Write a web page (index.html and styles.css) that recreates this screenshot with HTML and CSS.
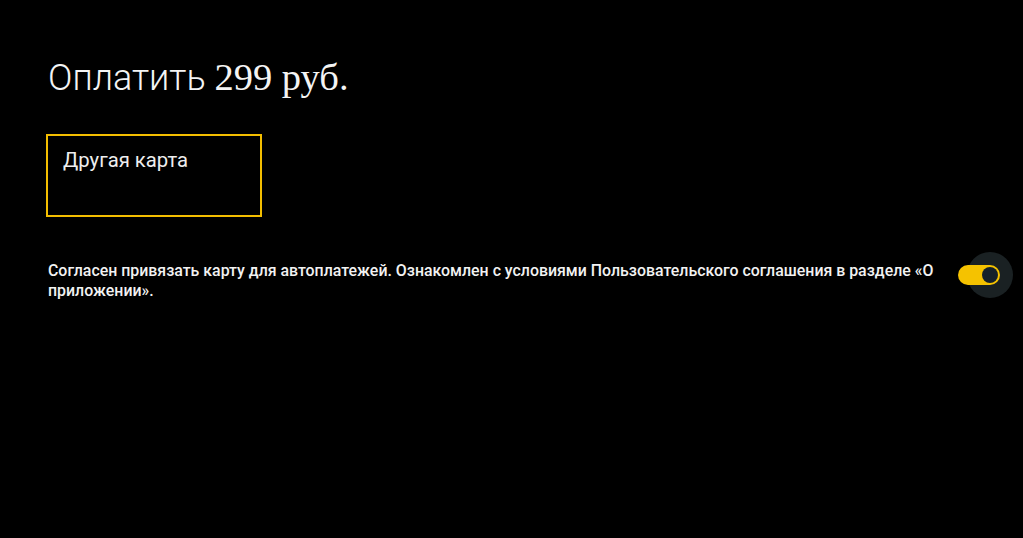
FILE: index.html
```html
<!DOCTYPE html>
<html lang="ru">
<head>
<meta charset="utf-8">
<link rel="stylesheet" href="styles.css">
</head>
<body>
<main class="page">
  <h1 class="title"><span class="title-word">Оплатить</span> <span class="title-sum">299 руб.</span></h1>
  <div class="card"><span class="card-label">Другая карта</span></div>
  <div class="agree">
    <p class="agree-text">Согласен привязать карту для автоплатежей. Ознакомлен с условиями Пользовательского соглашения в разделе «О приложении».</p>
    <div class="switch">
      <span class="halo"></span>
      <span class="track"></span>
      <span class="thumb"></span>
    </div>
  </div>
</main>
</body>
</html>
```

FILE: styles.css
```css
html, body {
  margin: 0;
  padding: 0;
  background: #000;
  width: 1023px;
  height: 538px;
  overflow: hidden;
}
.page {
  padding: 55px 0 0 48px;
  color: #f2f2f2;
  font-family: Roboto, "Noto Sans", sans-serif;
}
.title {
  margin: 0;
  font-weight: 300;
  font-size: 36px;
  line-height: 44px;
  color: #f4f4f4;
}
.title-sum {
  font-family: "Liberation Serif", "Times New Roman", serif;
  font-weight: 400;
  font-size: 38.5px;
}
.card {
  margin-top: 34px;
  margin-left: -2px;
  width: 212px;
  height: 79px;
  border: 2px solid #f3be00;
  box-sizing: content-box;
}
.card-label {
  display: block;
  padding: 12px 0 0 15px;
  font-size: 20.3px;
  line-height: 24px;
  font-weight: 400;
  color: #eeeeee;
}
.agree {
  display: flex;
  align-items: flex-start;
  margin-top: 44px;
}
.agree-text {
  margin: 0;
  width: 895px;
  font-size: 15.9px;
  line-height: 20px;
  font-weight: 500;
  color: #f2f2f2;
}
.switch {
  position: relative;
  width: 42px;
  height: 20px;
  margin-left: 15px;
  margin-top: 4px;
}
.halo {
  position: absolute;
  left: 9px;
  top: -13px;
  width: 46px;
  height: 46px;
  border-radius: 50%;
  background: #1a2123;
}
.track {
  position: absolute;
  left: 0;
  top: 0;
  width: 42px;
  height: 20px;
  border-radius: 10px;
  background: #f5c200;
}
.thumb {
  position: absolute;
  left: 24px;
  top: 2px;
  width: 16px;
  height: 16px;
  border-radius: 50%;
  background: #15212a;
}
```
